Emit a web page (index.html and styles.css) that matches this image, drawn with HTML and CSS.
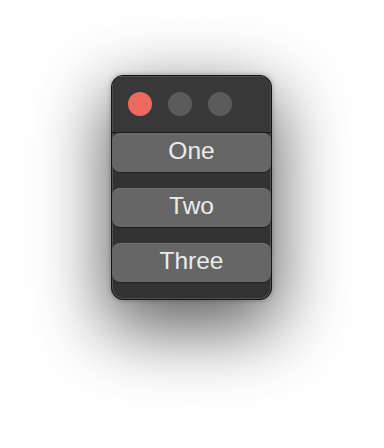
FILE: index.html
```html
<!DOCTYPE html>
<html>
<head>
<meta charset="utf-8">
<link rel="stylesheet" href="styles.css">
</head>
<body>
<div class="stage">
  <div class="window">
    <div class="titlebar">
      <span class="light close"></span>
      <span class="light"></span>
      <span class="light"></span>
    </div>
    <div class="content">
      <div class="btn">One</div>
      <div class="btn">Two</div>
      <div class="btn">Three</div>
    </div>
  </div>
</div>
</body>
</html>
```
FILE: styles.css
```css
html, body {
  margin: 0;
  padding: 0;
  background: #ffffff;
}
.stage {
  width: 384px;
  height: 448px;
  padding: 75px 0 0 111px;
  box-sizing: border-box;
  overflow: hidden;
}
.window {
  width: 161px;
  height: 225px;
  box-sizing: border-box;
  border: 1px solid #151515;
  border-radius: 12px;
  background: #323232;
  box-shadow: inset 0 0 0 1px #505050, 0 24px 70px 6px rgba(0,0,0,0.62), 0 0 5px rgba(0,0,0,0.3);
  overflow: hidden;
  display: flex;
  flex-direction: column;
  font-family: "Liberation Sans", Arial, sans-serif;
}
.titlebar {
  height: 57px;
  flex: none;
  box-sizing: border-box;
  padding: 16px 0 16px 16px;
  display: flex;
  gap: 16px;
  background: #383838;
  border-bottom: 1px solid #1c1c1c;
  box-shadow: inset 0 1px 0 #505050, inset 1px 0 0 #4a4a4a, inset -1px 0 0 #4a4a4a;
}
.light {
  width: 24px;
  height: 24px;
  border-radius: 50%;
  background: #5b5b5b;
}
.light.close {
  background: #ed6a5e;
}
.content {
  display: flex;
  flex-direction: column;
  gap: 16px;
}
.btn {
  height: 39px;
  flex: none;
  box-sizing: border-box;
  padding-bottom: 3px;
  line-height: 36px;
  text-align: center;
  font-size: 24.5px;
  color: #ebebeb;
  background: #666666;
  border-radius: 8px;
  box-shadow: inset 0 1px 0 rgba(255,255,255,0.08), 0 1px 1px rgba(0,0,0,0.35);
}
```
